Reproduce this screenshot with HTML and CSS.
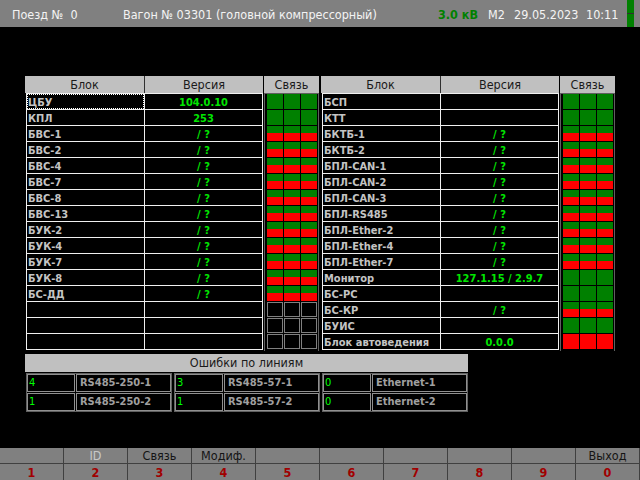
FILE: index.html
```html
<!DOCTYPE html>
<html lang="ru">
<head>
<meta charset="utf-8">
<title>Версии блоков</title>
<link rel="stylesheet" href="styles.css">
</head>
<body>
<div class="screen">
  <header class="topbar">
    <span class="train">Поезд №&nbsp;&nbsp;0</span>
    <span class="wagon">Вагон № 03301 (головной компрессорный)</span>
    <span class="kv">3.0 кВ</span>
    <span class="mode">М2</span>
    <span class="date">29.05.2023</span>
    <span class="time">10:11</span>
    <span class="ind"><i></i><i></i></span>
  </header>

  <main class="content">
    <div class="panels">
      <section class="panel">
        <div class="tbl">
          <div class="thead"><div>Блок</div><div>Версия</div></div>
          <div class="tbody">
            <div class="name focus">ЦБУ</div><div class="ver">104.0.10</div>
            <div class="name">КПЛ</div><div class="ver">253</div>
            <div class="name">БВС-1</div><div class="ver">/ ?</div>
            <div class="name">БВС-2</div><div class="ver">/ ?</div>
            <div class="name">БВС-4</div><div class="ver">/ ?</div>
            <div class="name">БВС-7</div><div class="ver">/ ?</div>
            <div class="name">БВС-8</div><div class="ver">/ ?</div>
            <div class="name">БВС-13</div><div class="ver">/ ?</div>
            <div class="name">БУК-2</div><div class="ver">/ ?</div>
            <div class="name">БУК-4</div><div class="ver">/ ?</div>
            <div class="name">БУК-7</div><div class="ver">/ ?</div>
            <div class="name">БУК-8</div><div class="ver">/ ?</div>
            <div class="name">БС-ДД</div><div class="ver">/ ?</div>
            <div class="name"></div><div class="ver"></div>
            <div class="name"></div><div class="ver"></div>
            <div class="name"></div><div class="ver"></div>
          </div>
        </div>
        <div class="link">
          <div class="lhead">Связь</div>
          <div class="lbody">
            <div class="lgrid">
              <i class="g"></i><i class="g"></i><i class="g"></i>
              <i class="g"></i><i class="g"></i><i class="g"></i>
              <i class="s"></i><i class="s"></i><i class="s"></i>
              <i class="s"></i><i class="s"></i><i class="s"></i>
              <i class="s"></i><i class="s"></i><i class="s"></i>
              <i class="s"></i><i class="s"></i><i class="s"></i>
              <i class="s"></i><i class="s"></i><i class="s"></i>
              <i class="s"></i><i class="s"></i><i class="s"></i>
              <i class="s"></i><i class="s"></i><i class="s"></i>
              <i class="s"></i><i class="s"></i><i class="s"></i>
              <i class="s"></i><i class="s"></i><i class="s"></i>
              <i class="s"></i><i class="s"></i><i class="s"></i>
              <i class="s"></i><i class="s"></i><i class="s"></i>
              <i class="e"></i><i class="e"></i><i class="e"></i>
              <i class="e"></i><i class="e"></i><i class="e"></i>
              <i class="e"></i><i class="e"></i><i class="e"></i>
            </div>
          </div>
        </div>
      </section>

      <section class="panel">
        <div class="tbl">
          <div class="thead"><div>Блок</div><div>Версия</div></div>
          <div class="tbody">
            <div class="name">БСП</div><div class="ver"></div>
            <div class="name">КТТ</div><div class="ver"></div>
            <div class="name">БКТБ-1</div><div class="ver">/ ?</div>
            <div class="name">БКТБ-2</div><div class="ver">/ ?</div>
            <div class="name">БПЛ-CAN-1</div><div class="ver">/ ?</div>
            <div class="name">БПЛ-CAN-2</div><div class="ver">/ ?</div>
            <div class="name">БПЛ-CAN-3</div><div class="ver">/ ?</div>
            <div class="name">БПЛ-RS485</div><div class="ver">/ ?</div>
            <div class="name">БПЛ-Ether-2</div><div class="ver">/ ?</div>
            <div class="name">БПЛ-Ether-4</div><div class="ver">/ ?</div>
            <div class="name">БПЛ-Ether-7</div><div class="ver">/ ?</div>
            <div class="name">Монитор</div><div class="ver">127.1.15 / 2.9.7</div>
            <div class="name">БС-РС</div><div class="ver"></div>
            <div class="name">БС-КР</div><div class="ver">/ ?</div>
            <div class="name">БУИС</div><div class="ver"></div>
            <div class="name">Блок автоведения</div><div class="ver">0.0.0</div>
          </div>
        </div>
        <div class="link">
          <div class="lhead">Связь</div>
          <div class="lbody">
            <div class="lgrid">
              <i class="g"></i><i class="g"></i><i class="g"></i>
              <i class="g"></i><i class="g"></i><i class="g"></i>
              <i class="s"></i><i class="s"></i><i class="s"></i>
              <i class="s"></i><i class="s"></i><i class="s"></i>
              <i class="s"></i><i class="s"></i><i class="s"></i>
              <i class="s"></i><i class="s"></i><i class="s"></i>
              <i class="s"></i><i class="s"></i><i class="s"></i>
              <i class="s"></i><i class="s"></i><i class="s"></i>
              <i class="s"></i><i class="s"></i><i class="s"></i>
              <i class="s"></i><i class="s"></i><i class="s"></i>
              <i class="s"></i><i class="s"></i><i class="s"></i>
              <i class="g"></i><i class="g"></i><i class="g"></i>
              <i class="g"></i><i class="g"></i><i class="g"></i>
              <i class="s"></i><i class="s"></i><i class="s"></i>
              <i class="g"></i><i class="g"></i><i class="g"></i>
              <i class="r"></i><i class="r"></i><i class="r"></i>
            </div>
          </div>
        </div>
      </section>
    </div>

    <section class="errors">
      <div class="ehead">Ошибки по линиям</div>
      <div class="ebody">
        <div class="egroup">
          <div class="cnt">4</div><div class="line">RS485-250-1</div>
          <div class="cnt">1</div><div class="line">RS485-250-2</div>
        </div>
        <div class="egroup">
          <div class="cnt">3</div><div class="line">RS485-57-1</div>
          <div class="cnt">1</div><div class="line">RS485-57-2</div>
        </div>
        <div class="egroup">
          <div class="cnt">0</div><div class="line">Ethernet-1</div>
          <div class="cnt">0</div><div class="line">Ethernet-2</div>
        </div>
      </div>
    </section>
  </main>

  <footer class="keys">
    <div class="klabel"></div>
    <div class="klabel dim">ID</div>
    <div class="klabel">Связь</div>
    <div class="klabel">Модиф.</div>
    <div class="klabel"></div>
    <div class="klabel"></div>
    <div class="klabel"></div>
    <div class="klabel"></div>
    <div class="klabel"></div>
    <div class="klabel">Выход</div>
    <div class="knum">1</div>
    <div class="knum">2</div>
    <div class="knum">3</div>
    <div class="knum">4</div>
    <div class="knum">5</div>
    <div class="knum">6</div>
    <div class="knum">7</div>
    <div class="knum">8</div>
    <div class="knum">9</div>
    <div class="knum">0</div>
  </footer>
</div>
</body>
</html>
```

FILE: styles.css
```css
* { box-sizing: border-box; }

html, body {
  margin: 0;
  padding: 0;
  background: #000;
}

body {
  font-family: "DejaVu Sans Condensed", "DejaVu Sans", sans-serif;
  font-size: 12px;
}

.screen {
  width: 640px;
  height: 480px;
  display: flex;
  flex-direction: column;
  overflow: hidden;
}

/* ---------- top bar ---------- */
.topbar {
  height: 27px;
  background: #808080;
  display: flex;
  align-items: stretch;
  padding-left: 12px;
  color: #f4f4f4;
  font-size: 12.5px;
  line-height: 27px;
  flex: none;
}
.topbar span { white-space: nowrap; padding-top: 1px; }
.train { width: 111px; }
.wagon { width: 315px; }
.kv { width: 50px; color: #008000; font-weight: bold; }
.mode { width: 26px; }
.date { width: 72px; }
.time { width: 41px; }
.ind {
  width: 7px;
  display: flex;
  flex-direction: column;
  gap: 1px;
  background: #303030;
  padding-top: 0 !important;
}
.ind i { flex: 1; background: #008000; }

/* ---------- panels ---------- */
.content {
  padding-left: 25px;
  padding-top: 49px;
}

.panels {
  display: flex;
  gap: 2px;
}

.panel {
  display: flex;
  gap: 1px;
}

.tbl { width: 238px; }

.thead {
  height: 17px;
  background: #c0c0c0;
  display: grid;
  grid-template-columns: 119px 119px;
  color: #1a1a1a;
  font-size: 12.5px;
  line-height: 17px;
  text-align: center;
}
.thead div + div { border-left: 1px solid #303030; }

.tbody {
  margin-left: 1px;
  width: 237px;
  background: #f0f0f0;
  display: grid;
  grid-template-columns: 117px 117px;
  grid-auto-rows: 15px;
  gap: 1px;
  padding: 1px;
}

.name, .ver {
  background: #000;
  font-size: 11px;
  font-weight: bold;
  line-height: 13px;
  padding-top: 2px;
  white-space: nowrap;
  overflow: hidden;
}
.name { color: #c4c4c4; padding-left: 1px; }
.ver { color: #00e600; text-align: center; }
.focus { outline: 1px dotted #fff; outline-offset: -1px; }

/* ---------- link status ---------- */
.link { width: 55px; }

.lhead {
  height: 17px;
  background: #c0c0c0;
  color: #1a1a1a;
  font-size: 12.5px;
  line-height: 17px;
  text-align: center;
}

.lbody {
  background: #606060;
  padding: 1px 1px 0 1px;
  height: 258px;
}

.lgrid {
  background: #000;
  height: 257px;
  display: grid;
  grid-template-columns: 16px 16px 16px;
  grid-auto-rows: 15px;
  gap: 1px;
  padding: 0 1px 1px 2px;
}
.lgrid i { display: block; }
.lgrid .g { background: #008000; }
.lgrid .r { background: #ff0000; }
.lgrid .s { background: linear-gradient(#008000 0 7px, #ff0000 7px 100%); }
.lgrid .e { border: 1px solid #808080; }

/* ---------- errors ---------- */
.errors {
  width: 443px;
  margin-top: 3px;
}

.ehead {
  height: 18px;
  background: #c0c0c0;
  color: #1a1a1a;
  font-size: 12.5px;
  line-height: 18px;
  text-align: center;
}

.ebody {
  display: flex;
  gap: 2px;
  padding: 1px 1px 2px 1px;
  background: #000;
}

.egroup {
  width: 146px;
  display: grid;
  grid-template-columns: 48px 95px;
  grid-auto-rows: 18px;
  gap: 1px;
  border: 1px solid #606060;
}

.cnt, .line {
  border: 1px solid #909090;
  font-size: 11px;
  line-height: 16px;
  white-space: nowrap;
  overflow: hidden;
}
.cnt { color: #00ff00; padding-left: 1px; }
.line { color: #a0a0a0; font-weight: bold; padding-left: 3px; }

/* ---------- soft keys ---------- */
.keys {
  margin-top: auto;
  height: 32px;
  display: grid;
  grid-template-columns: repeat(10, 64px);
  grid-template-rows: 16px 16px;
  background: #808080;
}

.klabel, .knum {
  border-right: 1px solid #404040;
  text-align: center;
  white-space: nowrap;
}
.klabel {
  border-bottom: 1px solid #404040;
  color: #141414;
  font-size: 12.5px;
  line-height: 15px;
}
.klabel.dim { color: #c8c8c8; }
.knum {
  color: #a00000;
  font-weight: bold;
  font-size: 12.5px;
  line-height: 17px;
}
```
